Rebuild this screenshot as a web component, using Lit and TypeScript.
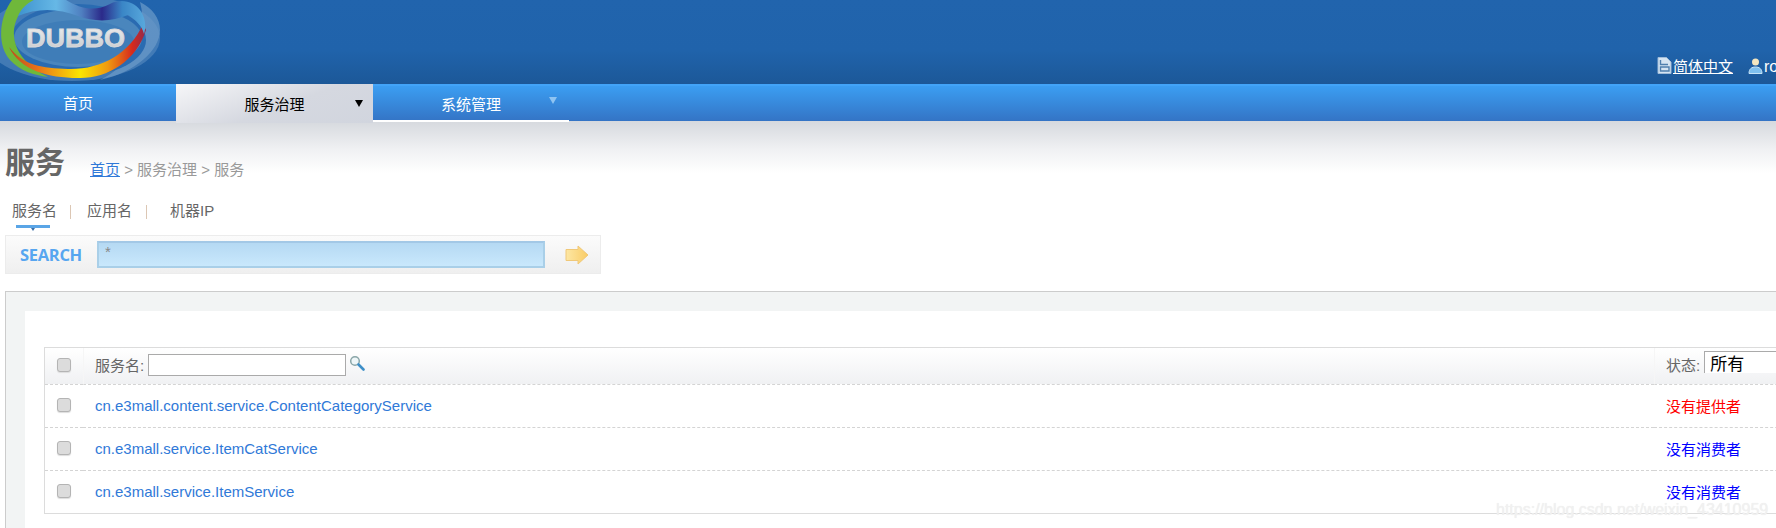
import { LitElement, html, css, svg } from "lit";
import { customElement } from "lit/decorators.js";

const logo = svg`
<svg class="logo" width="161" height="84" viewBox="0 0 161 84" aria-label="Dubbo">
  <defs>
    <linearGradient id="ring" x1="0" y1="0" x2="1" y2="0">
      <stop offset="0" stop-color="#b9501c"/><stop offset=".2" stop-color="#e8701a"/>
      <stop offset=".52" stop-color="#fbe500"/><stop offset=".72" stop-color="#ef9a10"/>
      <stop offset=".9" stop-color="#d62a1c"/><stop offset="1" stop-color="#8e2a50"/>
    </linearGradient>
    <linearGradient id="swoosh" x1="0" y1="0" x2="1" y2="0">
      <stop offset="0" stop-color="#3f93cf"/><stop offset=".3" stop-color="#66b8e6"/>
      <stop offset=".5" stop-color="#4f7fc0"/><stop offset=".66" stop-color="#2b2a8a"/>
      <stop offset=".82" stop-color="#3a86c6"/><stop offset="1" stop-color="#58a8dc"/>
    </linearGradient>
    <linearGradient id="letter" x1="0" y1="0" x2="0" y2="1">
      <stop offset="0" stop-color="#f2f2f2"/><stop offset="1" stop-color="#c4c7cb"/>
    </linearGradient>
  </defs>
  <ellipse cx="72" cy="38" rx="88" ry="43" fill="#5a8cc0" opacity=".6"/>
  <path d="M140 2 C152 8 160 18 160 30 C160 50 136 72 100 80 C128 66 150 40 140 2Z" fill="#6c9bc9" opacity=".7"/>
  <ellipse cx="78" cy="40" rx="68" ry="36" fill="#2a6bb1"/>
  <ellipse cx="78" cy="38" rx="64" ry="29" fill="#4a86bd"/>
  <ellipse cx="78" cy="42" rx="56" ry="22" fill="#3f7db8"/>
  <path d="M12 0 C0 16 -4 44 10 60 C20 71 34 75 48 77 C30 68 12 52 14 30 C15 18 22 8 34 0Z" fill="#6fb83a"/>
  <path d="M9 47 C24 66 42 68 68 69 C100 70 130 54 143 24 L146 30 C136 62 106 79 78 78 C48 78 20 70 9 47Z" fill="url(#ring)"/>
  <path d="M18 16 C24 2 40 -6 60 -4 C74 6 92 14 110 4 C122 -2 134 2 140 10 C146 18 146 28 144 34 C142 26 136 20 128 15 C112 22 94 22 78 16 C58 8 36 8 18 16Z" fill="url(#swoosh)"/>
  <text x="26" y="46.500" textLength="99" lengthAdjust="spacingAndGlyphs" class="wordmark" fill="url(#letter)" stroke="#d8dadd" stroke-width=".8">DUBBO</text>
</svg>`;

const docIcon = svg`
<svg width="15" height="17" viewBox="0 0 15 17">
  <path d="M1 .5H9.500L14 5V16.500H1Z" fill="#d5e4f2" stroke="#9fbbd8"/>
  <path d="M3.500 3V7.500H11M3.500 10H12V14H3.500Z" fill="none" stroke="#4f7fae" stroke-width="1.400"/>
</svg>`;

const userIcon = svg`
<svg width="15" height="17" viewBox="0 0 15 17">
  <circle cx="7.500" cy="5" r="3.500" fill="#f4e6c0"/>
  <path d="M1 16.500C1 11.500 4 10 7.500 10S14 11.500 14 16.500Z" fill="#7fc0ee" stroke="#c6e3f7"/>
</svg>`;

const goArrow = svg`
<svg width="24" height="20" viewBox="0 0 24 20">
  <defs><linearGradient id="go" x1="0" y1="0" x2="1" y2="0">
    <stop offset="0" stop-color="#fde7a4"/><stop offset="1" stop-color="#f9cc66"/></linearGradient></defs>
  <path d="M1 4.500H13V1L23 10 13 19V15.500H1Z" fill="url(#go)" stroke="#f0c878"/>
</svg>`;

const lens = svg`
<svg width="16" height="16" viewBox="0 0 16 16">
  <circle cx="6" cy="6" r="4.300" fill="#eef6f8" stroke="#8aa6a8" stroke-width="1.500"/>
  <path d="M9.500 9.500L14.500 14.500" stroke="#3e8fc8" stroke-width="2.600" stroke-linecap="round"/>
</svg>`;

const rows = [
  { name: "cn.e3mall.content.service.ContentCategoryService", status: "没有提供者", cls: "none" },
  { name: "cn.e3mall.service.ItemCatService", status: "没有消费者", cls: "idle" },
  { name: "cn.e3mall.service.ItemService", status: "没有消费者", cls: "idle" },
];

@customElement("app-root")
export class AppRoot extends LitElement {
  static styles = css`
    :host {
      display: block;
      width: 1776px;
      height: 528px;
      overflow: hidden;
      position: relative;
      background: #fff;
      font-family: "Liberation Sans", "Noto Sans CJK SC", sans-serif;
      font-size: 15px;
      color: #666;
    }
    a { color: #3079d8; text-decoration: none; }

    .top {
      height: 84px;
      display: flex;
      justify-content: space-between;
      align-items: flex-start;
      background: linear-gradient(#2164ad, #2063ab 60%, #1c5898);
    }
    .logo { display: block; }
    .wordmark { font: bold 26px "Liberation Sans", sans-serif; }
    .tools {
      width: 119px;
      height: 84px;
      box-sizing: border-box;
      padding-top: 57px;
      display: flex;
      align-items: flex-start;
      white-space: nowrap;
      overflow: hidden;
      color: #fff;
    }
    .tools svg { flex: none; display: block; }
    .tools a { color: #fff; text-decoration: underline; line-height: 20px; margin-left: 1px; }
    .tools .user { margin-left: 15px; }
    .tools .who { font-size: 16px; line-height: 20px; margin-left: 1px; }

    nav {
      height: 37px;
      box-sizing: border-box;
      border-top: 2px solid #42a4f8;
      display: flex;
      background: linear-gradient(#3b9ef2, #3474c5);
      color: #fff;
    }
    .tab {
      position: relative;
      width: 197px;
      height: 36px;
      display: flex;
      align-items: center;
      justify-content: center;
      line-height: 20px;
    }
    .tab.home { width: 176px; padding-right: 20px; box-sizing: border-box; height: 35px; }
    .tab.active {
      margin-top: -2px;
      height: 39px;
      color: #000;
      background: linear-gradient(160deg, #f6f6f8, #d5d8e0 55%, #d1d5de);
      padding-top: 2px;
      box-sizing: border-box;
    }
    .tab.sys { width: 196px; border-bottom: 2px solid #fff; height: 36px; box-sizing: border-box; padding-top: 3px; }
    .caret {
      position: absolute;
      right: 10px;
      top: 50%;
      margin-top: -4px;
      border: 4px solid transparent;
      border-top: 7px solid #000;
      border-bottom: 0;
    }
    .sys .caret { right: 12px; margin-top: -6px; border-top-color: #8fc4f2; }

    .content {
      background: linear-gradient(#d6d9de, #f0f1f3 55%, #fff) no-repeat 0 0 / 100% 52px;
      padding-top: 24px;
    }
    .heading { display: flex; align-items: flex-end; padding-left: 5px; height: 36px; }
    h1 { margin: 0; font-size: 30px; line-height: 36px; font-weight: bold; color: #666; }
    .crumbs { margin-left: 25px; line-height: 20px; padding-bottom: 1px; color: #999; }
    .crumbs a { text-decoration: underline; }

    .modes {
      display: flex;
      height: 34px;
      margin-top: 20px;
      padding-left: 12px;
      line-height: 20px;
      box-sizing: border-box;
    }
    .mode { position: relative; height: 20px; }
    .mode.on::after {
      content: "";
      position: absolute;
      left: 4px;
      width: 34px;
      top: 24px;
      height: 3px;
      background: #5aa5e6;
    }
    .mode.on::before {
      content: "";
      position: absolute;
      left: 19px;
      top: 27px;
      border: 2px solid transparent;
      border-top: 3px solid #3b6fa8;
      border-bottom: 0;
    }
    .sep { width: 1px; height: 14px; margin: 4px 0 0; background: #dcc7b4; }
    .s1 { margin-left: 13px; margin-right: 16px; }
    .s2 { margin-left: 14px; margin-right: 23px; }

    .search {
      margin-left: 5px;
      width: 596px;
      height: 39px;
      box-sizing: border-box;
      display: flex;
      align-items: center;
      border: 1px solid #ececec;
      background: linear-gradient(#fbfbfb, #efefef);
    }
    .search b {
      width: 91px;
      padding-left: 14px;
      box-sizing: border-box;
      font: bold 16.500px "Open Sans", "Liberation Sans", sans-serif;
      color: #57a6f0;
      letter-spacing: -.3px;
    }
    .search input {
      width: 448px;
      height: 27px;
      box-sizing: border-box;
      border: 2px solid #a9cfe8;
      border-top-color: #a3c8e6;
      background: linear-gradient(#b5d9f3, #c9e8fc);
      padding: 0 6px 6px;
      font: 15px "Liberation Sans", sans-serif;
      color: #888;
      outline: none;
    }
    .search svg { margin-left: 20px; flex: none; }

    .panel {
      margin: 17px -60px 0 5px;
      border: 1px solid #ccc;
      background: #f2f4f4;
      padding: 19px 0 0 19px;
    }
    .inner { background: #fff; padding: 36px 0 40px 19px; }

    .grid {
      display: grid;
      grid-template-columns: 38px 1571px 200px;
      border: 1px solid #dcdcdc;
      border-right: 0;
      box-sizing: border-box;
    }
    .cell {
      display: flex;
      align-items: center;
      height: 43px;
      border-bottom: 1px dashed #d4d4d4;
      box-sizing: border-box;
      padding: 0 0 2px 12px;
    }
    .head { height: 37px; background: linear-gradient(#fff, #f0f1f3); color: #666; padding-bottom: 2px; }
    .last { height: 42px; border-bottom: 0; }
    .head.main, .head.state { border-left: 1px solid #f6f6f6; padding-left: 11px; }
    .lab { margin-bottom: 2px; }
    input[type="checkbox"] {
      appearance: none;
      margin: 0;
      width: 14px;
      height: 14px;
      border: 1px solid #b4b4b4;
      border-radius: 3px;
      background: #dcdcdc;
      box-shadow: 0 1px 1px #ddd;
    }
    .filter { width: 198px; height: 22px; box-sizing: border-box; border: 1px solid #aaa; background: #fff; margin: 0 3px 0 4px; outline: none; }
    .head svg { margin-bottom: 4px; }
    .select {
      width: 120px;
      height: 22px;
      box-sizing: border-box;
      align-self: flex-start;
      margin: 3px 0 0 4px;
      border: 1px solid #aaa;
      border-bottom: 0;
      padding: 1px 0 0 5px;
      font-size: 17px;
      line-height: 24px;
      color: #000;
      background: #fff;
    }
    .cell a { font-size: 15px; }
    .none { color: #f00; }
    .idle { color: #00f; }
    .mark {
      position: absolute;
      left: 1496px;
      top: 499px;
      font-size: 16px;
      line-height: 22px;
      color: #f1f1f1;
      text-shadow: 0 0 1px #e9e9e9;
      white-space: nowrap;
      pointer-events: none;
    }
  `;

  render() {
    return html`
      <div class="top">
        ${logo}
        <div class="tools">
          ${docIcon}<a href="#">简体中文</a>
          <span class="user">${userIcon}</span><span class="who">root</span>
        </div>
      </div>
      <nav>
        <div class="tab home">首页</div>
        <div class="tab active">服务治理<i class="caret"></i></div>
        <div class="tab sys">系统管理<i class="caret"></i></div>
      </nav>
      <div class="content">
        <div class="heading">
          <h1>服务</h1>
          <div class="crumbs"><a href="#">首页</a> &gt; 服务治理 &gt; 服务</div>
        </div>
        <div class="modes">
          <span class="mode on">服务名</span><i class="sep s1"></i>
          <span class="mode">应用名</span><i class="sep s2"></i>
          <span class="mode">机器IP</span>
        </div>
        <div class="search">
          <b>SEARCH</b>
          <input value="*" />
          ${goArrow}
        </div>
        <div class="panel">
          <div class="inner">
            <div class="grid">
              <div class="cell head"><input type="checkbox" /></div>
              <div class="cell main head"><span class="lab">服务名:</span><input class="filter" />${lens}</div>
              <div class="cell state head"><span class="lab">状态:</span><div class="select">所有</div></div>
              ${rows.map(
                (r, i) => html`
                  <div class="cell ${i === 2 ? "last" : ""}"><input type="checkbox" /></div>
                  <div class="cell main ${i === 2 ? "last" : ""}"><a href="#">${r.name}</a></div>
                  <div class="cell state ${i === 2 ? "last" : ""}"><span class=${r.cls}>${r.status}</span></div>
                `
              )}
            </div>
          </div>
        </div>
      </div>
      <div class="mark">https://blog.csdn.net/weixin_43410959</div>
    `;
  }
}
